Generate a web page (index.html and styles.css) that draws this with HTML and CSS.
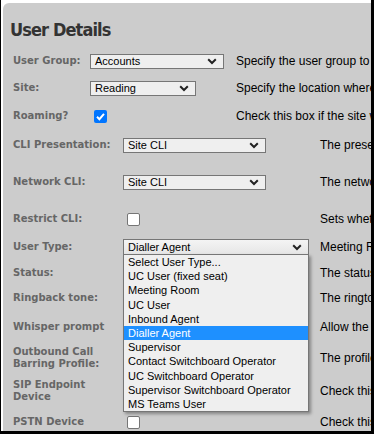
FILE: index.html
```html
<!DOCTYPE html>
<html>
<head>
<meta charset="utf-8">
<link rel="stylesheet" href="styles.css">
</head>
<body>
<div class="frame">
  <div class="panel">
    <h1 class="title">User Details</h1>

    <div class="form form-a">
      <div class="label">User Group:</div>
      <div class="field"><div class="select sel-group"><span>Accounts</span><svg class="chev" width="10" height="7" viewBox="0 0 10 7"><path d="M1.2 1.3 L5 5 L8.8 1.3" fill="none" stroke="#222" stroke-width="2"/></svg></div></div>
      <div class="desc">Specify the user group to which this user belongs</div>

      <div class="label">Site:</div>
      <div class="field"><div class="select sel-site"><span>Reading</span><svg class="chev" width="10" height="7" viewBox="0 0 10 7"><path d="M1.2 1.3 L5 5 L8.8 1.3" fill="none" stroke="#222" stroke-width="2"/></svg></div></div>
      <div class="desc">Specify the location where this user is based</div>

      <div class="label">Roaming?</div>
      <div class="field"><span class="check checked"><svg width="13" height="13" viewBox="0 0 13 13"><path d="M3 6.8 L5.4 9.2 L10 3.8" fill="none" stroke="#fff" stroke-width="2"/></svg></span></div>
      <div class="desc">Check this box if the site will vary</div>
    </div>

    <div class="form form-b">
      <div class="label">CLI Presentation:</div>
      <div class="field"><div class="select sel-cli"><span>Site CLI</span><svg class="chev" width="10" height="7" viewBox="0 0 10 7"><path d="M1.2 1.3 L5 5 L8.8 1.3" fill="none" stroke="#222" stroke-width="2"/></svg></div></div>
      <div class="desc">The presentation number</div>

      <div class="label">Network CLI:</div>
      <div class="field"><div class="select sel-cli"><span>Site CLI</span><svg class="chev" width="10" height="7" viewBox="0 0 10 7"><path d="M1.2 1.3 L5 5 L8.8 1.3" fill="none" stroke="#222" stroke-width="2"/></svg></div></div>
      <div class="desc">The network number</div>

      <div class="label">Restrict CLI:</div>
      <div class="field"><span class="check"></span></div>
      <div class="desc">Sets whether</div>

      <div class="label">User Type:</div>
      <div class="field">
        <div class="select sel-type"><span>Dialler Agent</span><svg class="chev" width="10" height="7" viewBox="0 0 10 7"><path d="M1.2 1.3 L5 5 L8.8 1.3" fill="none" stroke="#222" stroke-width="2"/></svg>
          <ul class="options">
            <li>Select User Type...</li>
            <li>UC User (fixed seat)</li>
            <li>Meeting Room</li>
            <li>UC User</li>
            <li>Inbound Agent</li>
            <li class="active">Dialler Agent</li>
            <li>Supervisor</li>
            <li>Contact Switchboard Operator</li>
            <li>UC Switchboard Operator</li>
            <li>Supervisor Switchboard Operator</li>
            <li>MS Teams User</li>
          </ul>
        </div>
      </div>
      <div class="desc">Meeting Room</div>

      <div class="label">Status:</div>
      <div class="field"></div>
      <div class="desc">The status</div>

      <div class="label">Ringback tone:</div>
      <div class="field"></div>
      <div class="desc">The ringtone</div>

      <div class="label">Whisper prompt</div>
      <div class="field"></div>
      <div class="desc">Allow the</div>

      <div class="label">Outbound Call<br>Barring Profile:</div>
      <div class="field"></div>
      <div class="desc">The profile</div>

      <div class="label">SIP Endpoint<br>Device</div>
      <div class="field"></div>
      <div class="desc">Check this</div>

      <div class="label">PSTN Device</div>
      <div class="field"><span class="check"></span></div>
      <div class="desc">Check this</div>
    </div>
  </div>
</div>
</body>
</html>
```
FILE: styles.css
```css
html, body {
  margin: 0;
  padding: 0;
  background: #fff;
}

.frame {
  box-sizing: border-box;
  width: 374px;
  height: 434px;
  border-left: 1px solid #000;
  border-right: 3px solid #000;
  border-bottom: 3px solid #000;
  padding: 3px 0 0 2px;
  overflow: hidden;
}

.panel {
  height: 100%;
  background: #cccccc;
  border-top-left-radius: 6px;
  padding: 16px 0 0 7px;
  box-sizing: border-box;
  overflow: hidden;
}

.title {
  margin: 0 0 6px 0;
  font-family: "DejaVu Sans Condensed", "DejaVu Sans", sans-serif;
  font-weight: bold;
  font-size: 18px;
  line-height: 22px;
  letter-spacing: -0.9px;
  color: #333333;
}

.form {
  display: grid;
  align-items: center;
  padding-left: 3px;
}

.form-a {
  grid-template-columns: 77px 146px 200px;
  grid-template-rows: 28px 26px 30px;
}

.form-b {
  grid-template-columns: 110px 197px 200px;
  grid-template-rows: 28px 46px 28px 28px 24px 26px 32px 30px 36px 26px;
}

.label {
  font-family: "DejaVu Sans", Verdana, sans-serif;
  font-weight: bold;
  font-size: 10px;
  line-height: 12px;
  color: #666666;
  white-space: nowrap;
}

.field {
  display: flex;
  align-items: center;
}

.desc {
  font-family: "Liberation Sans", Arial, sans-serif;
  font-size: 12px;
  line-height: 14px;
  color: #000;
  white-space: nowrap;
}

.select {
  position: relative;
  box-sizing: border-box;
  height: 15px;
  border: 1px solid #767676;
  background: #efefef;
  display: flex;
  align-items: center;
  justify-content: space-between;
  padding: 0 6px 0 4px;
  font-family: "Liberation Sans", Arial, sans-serif;
  font-size: 11px;
  color: #000;
}

.sel-group { width: 134px; }
.sel-site { width: 106px; }
.sel-cli { width: 143px; }
.sel-type {
  width: 186px;
  height: 16px;
  background: linear-gradient(#f4f4f4, #e6e6e6);
}

.chev {
  display: block;
}

.check {
  box-sizing: border-box;
  width: 13px;
  height: 13px;
  margin-left: 4px;
  border: 1px solid #767676;
  border-radius: 2px;
  background: #fff;
}

.check.checked {
  border: none;
  background: #0075ff;
}

.check svg {
  display: block;
}

.options {
  position: absolute;
  top: 100%;
  left: -1px;
  width: 186px;
  box-sizing: border-box;
  margin: 0;
  padding: 0;
  list-style: none;
  border: 1px solid #767676;
  background: #efefef;
  box-shadow: 2px 2px 3px rgba(0, 0, 0, 0.35);
  z-index: 5;
}

.options li {
  height: 14.2px;
  line-height: 14.2px;
  padding-left: 4px;
  font-family: "Liberation Sans", Arial, sans-serif;
  font-size: 11px;
  color: #000;
  white-space: nowrap;
}

.options li.active {
  background: #1e90ff;
  color: #fff;
}
```
